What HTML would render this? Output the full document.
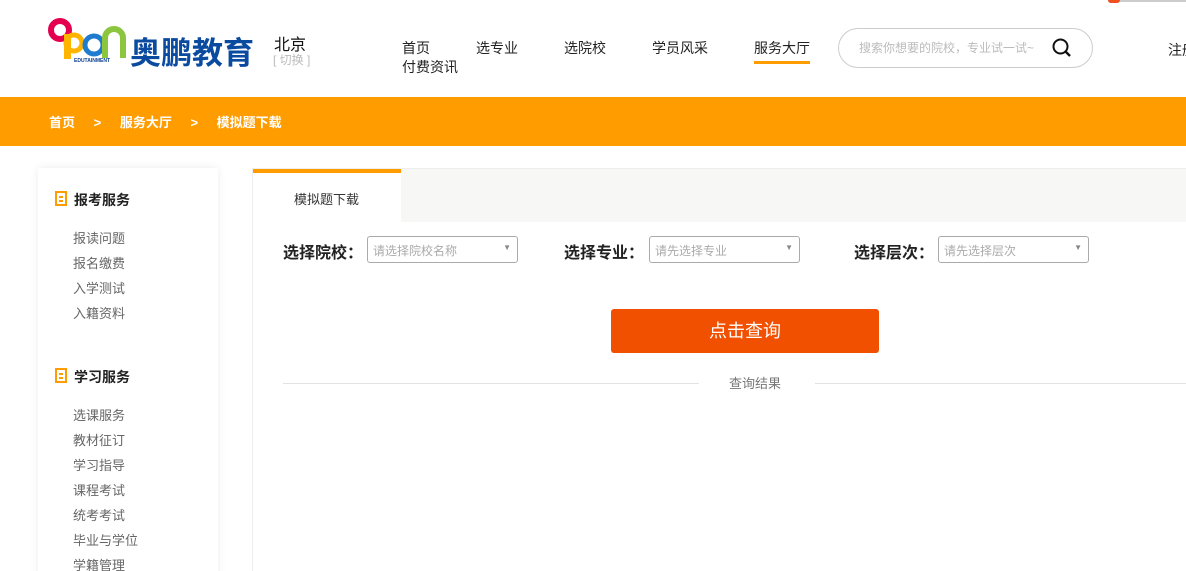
<!DOCTYPE html>
<html><head><meta charset="utf-8"><style>
*{margin:0;padding:0;box-sizing:border-box}
html,body{width:1186px;height:571px;overflow:hidden}
body{background:#fff;font-family:"Liberation Sans","Noto Sans CJK SC",sans-serif;position:relative;color:#333}
.a{position:absolute;white-space:nowrap}
.nav{font-size:14px;color:#222}
.side{left:38px;top:168px;width:180px;height:420px;background:#fff;box-shadow:0 0 8px rgba(0,0,0,.08)}
.sh{font-size:14px;font-weight:bold;color:#222}
.si{font-size:13px;color:#666}
.ic{width:12px;height:15px;border:2px solid #ff9c00;background:#fff}
.ic:before,.ic:after{content:"";position:absolute;left:2px;right:2px;height:2px;background:#ff9c00}
.ic:before{top:3px}.ic:after{top:7px}
.lab{font-size:16px;font-weight:bold;color:#222}
.sel{height:27px;border:1px solid #aaa;border-radius:3px;font-size:12px;color:#aaa;padding:5px 5px;background:#fff}
.sel:after{content:"▼";position:absolute;right:6px;top:6px;font-size:8px;color:#888}
</style></head><body>
<div class="a" style="left:1108px;top:0;width:78px;height:2px;background:#ccc"></div>
<div class="a" style="left:1108px;top:0;width:12px;height:3px;background:#f05020;border-radius:0 0 6px 6px"></div>
<svg class="a" style="left:48px;top:18px" width="80" height="46" viewBox="0 0 80 46">
<circle cx="12" cy="12" r="9" fill="none" stroke="#e4004f" stroke-width="6"/>
<rect x="16" y="16" width="7" height="25" fill="#ffb400"/>
<circle cx="26" cy="25" r="8" fill="none" stroke="#ffb400" stroke-width="5"/>
<circle cx="46" cy="27" r="9" fill="none" stroke="#1f7bd0" stroke-width="5"/>
<path d="M57 40 V20 a9 9 0 0 1 18 0 V40" fill="none" stroke="#8cc63f" stroke-width="6"/>
<text x="26" y="44" font-size="5" font-weight="bold" fill="#0a3d91" font-family="Liberation Sans">EDUTAINMENT</text>
</svg>
<div class="a" style="left:130px;top:28px;font-size:31px;font-weight:bold;color:#0a4ba0">奥鹏教育</div>
<div class="a" style="left:274px;top:31px;font-size:16px;color:#111">北京</div>
<div class="a" style="left:273px;top:51px;font-size:12px;color:#bbb">[ 切换 ]</div>
<div class="a nav" style="left:402px;top:38px">首页</div>
<div class="a nav" style="left:476px;top:38px">选专业</div>
<div class="a nav" style="left:564px;top:38px">选院校</div>
<div class="a nav" style="left:652px;top:38px">学员风采</div>
<div class="a nav" style="left:754px;top:38px">服务大厅</div>
<div class="a" style="left:754px;top:61px;width:56px;height:3px;background:#ff9c00"></div>
<div class="a nav" style="left:402px;top:57px">付费资讯</div>
<div class="a" style="left:838px;top:28px;width:255px;height:40px;border:1px solid #ccc;border-radius:20px"></div>
<div class="a" style="left:859px;top:39px;font-size:12px;color:#bbb">搜索你想要的院校，专业试一试~</div>
<svg class="a" style="left:1051px;top:37px" width="22" height="22" viewBox="0 0 22 22"><circle cx="9.5" cy="9.5" r="7" fill="none" stroke="#111" stroke-width="2"/><path d="M14.5 14.5 L19 19" stroke="#111" stroke-width="2.4"/></svg>
<div class="a nav" style="left:1168px;top:40px">注册</div>
<div class="a" style="left:0;top:97px;width:1186px;height:49px;background:#ff9c00"></div>
<div class="a" style="left:49px;top:112px;font-size:13px;color:#fff;font-weight:bold">首页 <span style="margin:0 15px">&gt;</span> 服务大厅 <span style="margin:0 15px">&gt;</span> 模拟题下载</div>
<div class="a side"></div>
<div class="a ic" style="left:55px;top:191px"></div>
<div class="a sh" style="left:74px;top:190px">报考服务</div>
<div class="a si" style="left:73px;top:228px">报读问题</div>
<div class="a si" style="left:73px;top:253px">报名缴费</div>
<div class="a si" style="left:73px;top:278px">入学测试</div>
<div class="a si" style="left:73px;top:303px">入籍资料</div>
<div class="a ic" style="left:55px;top:368px"></div>
<div class="a sh" style="left:74px;top:367px">学习服务</div>
<div class="a si" style="left:73px;top:405px">选课服务</div>
<div class="a si" style="left:73px;top:430px">教材征订</div>
<div class="a si" style="left:73px;top:455px">学习指导</div>
<div class="a si" style="left:73px;top:480px">课程考试</div>
<div class="a si" style="left:73px;top:505px">统考考试</div>
<div class="a si" style="left:73px;top:530px">毕业与学位</div>
<div class="a si" style="left:73px;top:555px">学籍管理</div>
<div class="a" style="left:252px;top:168px;width:934px;height:410px;border:1px solid #eee;border-right:none"></div>
<div class="a" style="left:253px;top:169px;width:933px;height:53px;background:#f7f7f5"></div>
<div class="a" style="left:253px;top:169px;width:148px;height:53px;background:#fff;border-top:4px solid #ff9c00"></div>
<div class="a" style="left:294px;top:189px;font-size:13px;color:#333">模拟题下载</div>
<div class="a lab" style="left:283px;top:239px">选择院校：</div>
<div class="a sel" style="left:367px;top:236px;width:151px">请选择院校名称</div>
<div class="a lab" style="left:564px;top:239px">选择专业：</div>
<div class="a sel" style="left:649px;top:236px;width:151px">请先选择专业</div>
<div class="a lab" style="left:854px;top:239px">选择层次：</div>
<div class="a sel" style="left:938px;top:236px;width:151px">请先选择层次</div>
<div class="a" style="left:611px;top:309px;width:268px;height:44px;background:#f05000;border-radius:3px;color:#fff;font-size:18px;text-align:center;line-height:44px">点击查询</div>
<div class="a" style="left:283px;top:383px;width:416px;height:1px;background:#e3e3e3"></div>
<div class="a" style="left:815px;top:383px;width:371px;height:1px;background:#e3e3e3"></div>
<div class="a" style="left:729px;top:373px;font-size:13px;color:#777">查询结果</div>
</body></html>
